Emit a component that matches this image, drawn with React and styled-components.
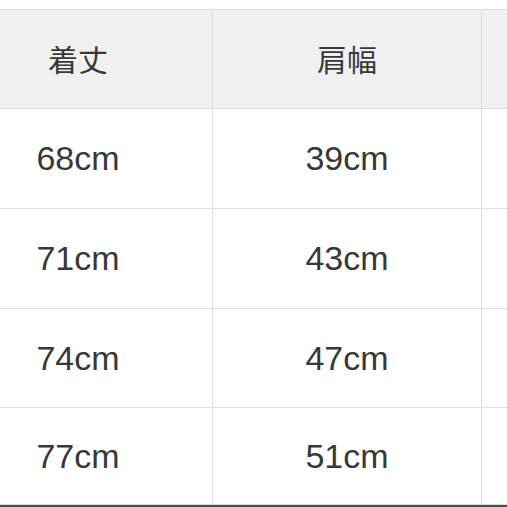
import React from "react";
import styled, { createGlobalStyle } from "styled-components";

const GlobalStyle = createGlobalStyle`
  html, body {
    margin: 0;
    padding: 0;
    background: #fff;
    overflow: hidden;
  }
`;

// third column runs off the right edge, only its left border shows
const headers = ["着丈", "肩幅", ""];
const rows = [
  { height: 100, cells: ["68cm", "39cm", ""] },
  { height: 100, cells: ["71cm", "43cm", ""] },
  { height: 99, cells: ["74cm", "47cm", ""] },
  { height: 97, cells: ["77cm", "51cm", ""] },
];

const App = () => {
  return (
    <Page>
      <GlobalStyle />
      <Table>
        <Row $height={99} $head>
          {headers.map((h, i) => (
            <HeadCell key={i}>{h}</HeadCell>
          ))}
        </Row>
        {rows.map((row, i) => (
          <Row key={i} $height={row.height}>
            {row.cells.map((c, j) => (
              <Cell key={j}>{c}</Cell>
            ))}
          </Row>
        ))}
      </Table>
      <BottomBar />
    </Page>
  );
};

export default App;

const Page = styled.div`
  width: 507px;
  height: 507px;
  padding-top: 9px;
  box-sizing: border-box;
  display: flex;
  flex-direction: column;
  overflow: hidden;
  background: #fff;
`;

const Table = styled.div`
  margin-left: -56px;
  width: 807px;
  border-top: 1px solid #dedede;
  display: flex;
  flex-direction: column;
`;

const Row = styled.div`
  display: grid;
  grid-template-columns: repeat(3, 269px);
  height: ${(p) => p.$height}px;
  box-sizing: border-box;
  border-bottom: 1px solid #dedede;
  background: ${(p) => (p.$head ? "#f0f0f0" : "#fff")};
`;

const Cell = styled.div`
  display: flex;
  align-items: center;
  justify-content: center;
  border-right: 1px solid #dedede;
  font-family: "Liberation Sans", Arial, sans-serif;
  font-size: 34px;
  color: #383838;
`;

const HeadCell = styled(Cell)`
  font-family: "Noto Sans CJK JP", "Noto Sans", sans-serif;
  font-size: 30px;
  padding-bottom: 2px;
`;

const BottomBar = styled.div`
  margin-top: auto;
  height: 2px;
  background: #4a4a4a;
`;
